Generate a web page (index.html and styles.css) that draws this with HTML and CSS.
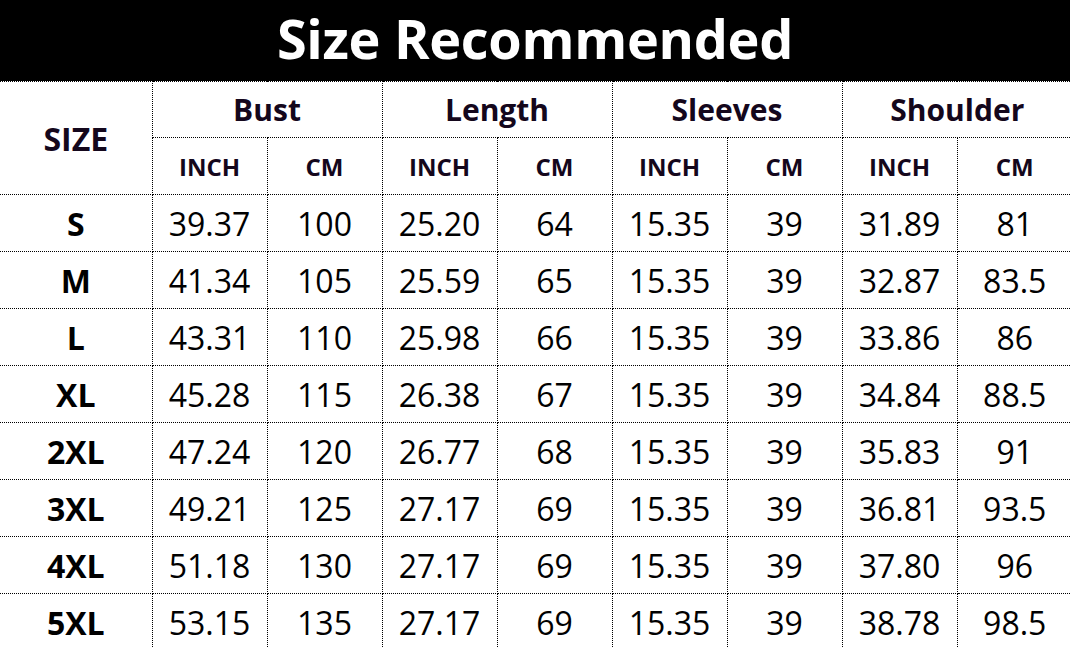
FILE: index.html
```html
<!DOCTYPE html>
<html>
<head>
<meta charset="utf-8">
<link rel="stylesheet" href="styles.css">
</head>
<body>
<div class="title">Size Recommended</div>
<table class="chart">
  <colgroup>
    <col class="c-size">
    <col class="c-val"><col class="c-val"><col class="c-val"><col class="c-val">
    <col class="c-val"><col class="c-val"><col class="c-val"><col class="c-val">
  </colgroup>
  <thead>
    <tr class="h1">
      <th rowspan="2" class="size-head">SIZE</th>
      <th colspan="2">Bust</th>
      <th colspan="2">Length</th>
      <th colspan="2">Sleeves</th>
      <th colspan="2">Shoulder</th>
    </tr>
    <tr class="h2">
      <th>INCH</th><th>CM</th>
      <th>INCH</th><th>CM</th>
      <th>INCH</th><th>CM</th>
      <th>INCH</th><th>CM</th>
    </tr>
  </thead>
  <tbody>
    <tr><th>S</th><td>39.37</td><td>100</td><td>25.20</td><td>64</td><td>15.35</td><td>39</td><td>31.89</td><td>81</td></tr>
    <tr><th>M</th><td>41.34</td><td>105</td><td>25.59</td><td>65</td><td>15.35</td><td>39</td><td>32.87</td><td>83.5</td></tr>
    <tr><th>L</th><td>43.31</td><td>110</td><td>25.98</td><td>66</td><td>15.35</td><td>39</td><td>33.86</td><td>86</td></tr>
    <tr><th>XL</th><td>45.28</td><td>115</td><td>26.38</td><td>67</td><td>15.35</td><td>39</td><td>34.84</td><td>88.5</td></tr>
    <tr><th>2XL</th><td>47.24</td><td>120</td><td>26.77</td><td>68</td><td>15.35</td><td>39</td><td>35.83</td><td>91</td></tr>
    <tr><th>3XL</th><td>49.21</td><td>125</td><td>27.17</td><td>69</td><td>15.35</td><td>39</td><td>36.81</td><td>93.5</td></tr>
    <tr><th>4XL</th><td>51.18</td><td>130</td><td>27.17</td><td>69</td><td>15.35</td><td>39</td><td>37.80</td><td>96</td></tr>
    <tr><th>5XL</th><td>53.15</td><td>135</td><td>27.17</td><td>69</td><td>15.35</td><td>39</td><td>38.78</td><td>98.5</td></tr>
  </tbody>
</table>
</body>
</html>
```
FILE: styles.css
```css
html, body {
  margin: 0;
  padding: 0;
  background: #fff;
  overflow: hidden;
}
body {
  width: 1070px;
  height: 648px;
  font-family: "Open Sans", "Noto Sans", sans-serif;
}
.title {
  height: 81px;
  background: #000;
  color: #fff;
  font-weight: 700;
  font-size: 54px;
  line-height: 76px;
  text-align: center;
  letter-spacing: -0.3px;
}
.chart {
  border-collapse: collapse;
  table-layout: fixed;
  width: 1072px;
}
.c-size { width: 152px; }
.c-val { width: 115px; }
.chart th, .chart td {
  border: 1px dotted #000;
  padding: 0;
  text-align: center;
  vertical-align: middle;
  white-space: nowrap;
}
.chart tr > :first-child { border-left: none; }
.chart tr > :last-child { border-right: none; }
.chart th.size-head { border-left: none; }
.chart thead th {
  color: #14071c;
  font-weight: 700;
}
.h1 { height: 56px; }
.h1 th { font-size: 30px; }
.h1 th.size-head { font-size: 32px; }
.h2 { height: 57px; }
.h2 th { font-size: 24px; }
.chart tbody tr { height: 57px; }
.chart tbody th {
  font-size: 32px;
  font-weight: 700;
  color: #000;
}
.chart tbody td {
  font-size: 32px;
  font-weight: 400;
  color: #000;
}
.chart tbody td.dec { padding-right: 6px; }
```
